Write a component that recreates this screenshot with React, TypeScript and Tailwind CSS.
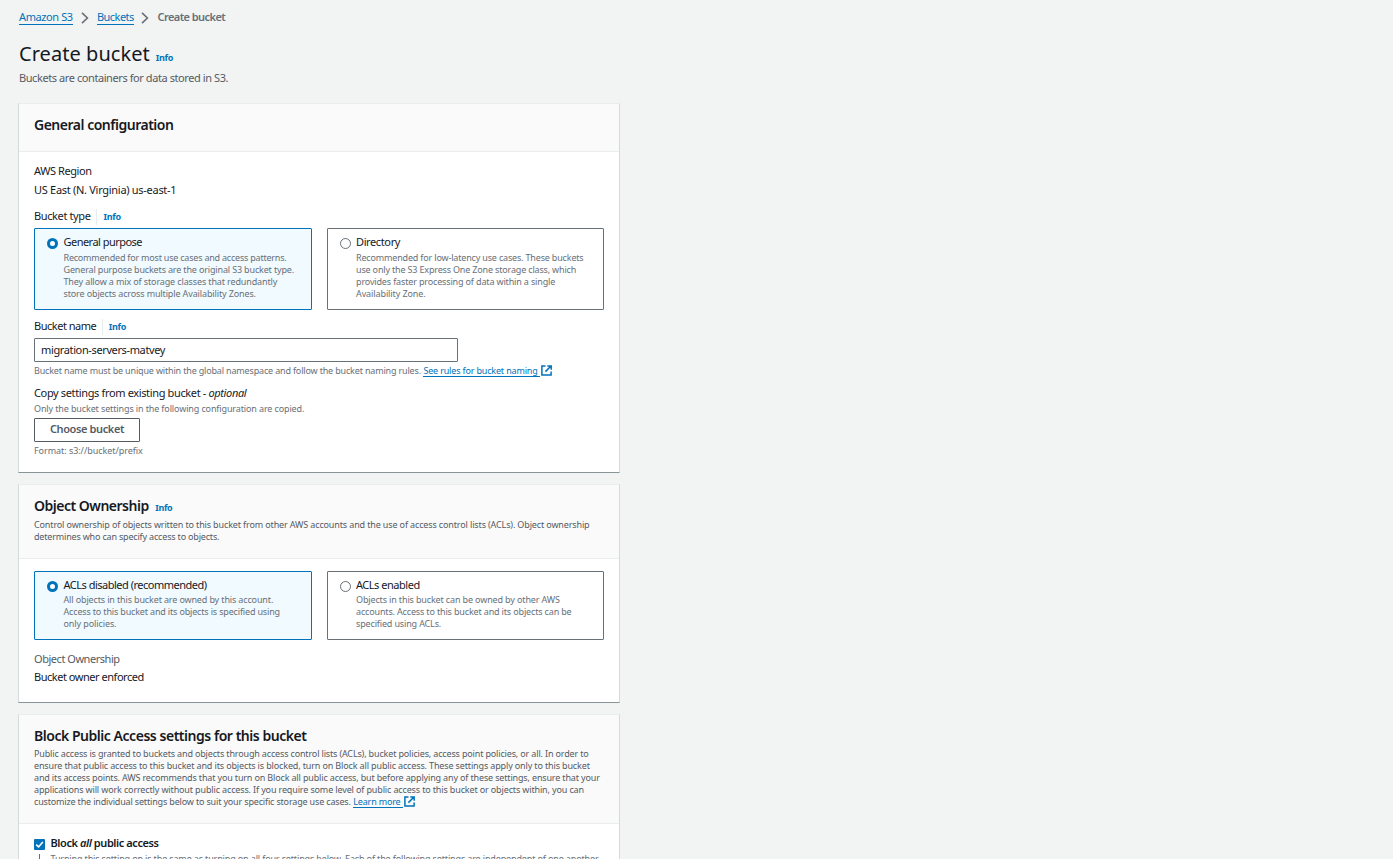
import type { ReactNode } from "react";

const BODY = "block whitespace-nowrap text-[11px] leading-[18px]";
const SMALL = "block whitespace-nowrap text-[9px] leading-[12px]";

function ExternalIcon() {
  return (
    <svg className="h-[11px] w-[11px] shrink-0" viewBox="0 0 11 11" fill="none" stroke="#0073bb" strokeWidth="1.5">
      <path d="M4.5 1H0.9v9.1h9.2V6.5" />
      <path d="M6.3 0.9h3.9v3.9M10 1 4.4 6.6" />
    </svg>
  );
}

function Chevron() {
  return (
    <svg className="h-[12px] w-[8px] shrink-0" viewBox="0 0 8 12" fill="none" stroke="#687078" strokeWidth="1.6">
      <path d="M1 0.8l5.4 5.2L1 11.2" />
    </svg>
  );
}

function Info() {
  return <a className="block whitespace-nowrap text-[9px] font-bold leading-[12px] tracking-[-0.3px] text-[#0073bb]">Info</a>;
}

function SmallLink({ children }: { children: ReactNode }) {
  return (
    <a className="flex h-[12px] gap-[1px] text-[#0073bb]">
      <span className="whitespace-nowrap pr-[2px] shadow-[inset_0_-1px_0_#0073bb]">{children}</span>
      <ExternalIcon />
    </a>
  );
}

function Card({ header, headerClass, className, children }: { header: ReactNode; headerClass: string; className: string; children: ReactNode }) {
  return (
    <section className={"flex w-[602px] shrink-0 flex-col border border-[#d5dbdb] border-t-[#eaeded] border-b-[#879596] bg-white " + className}>
      <header className={"shrink-0 border-b border-[#eaeded] bg-[#fafafa] px-[15px] " + headerClass}>{header}</header>
      <div className="px-[15px]">{children}</div>
    </section>
  );
}

function Option({ selected, title, titleClass, lines, className }: { selected?: boolean; title: string; titleClass: string; lines: [string, string][]; className: string }) {
  return (
    <label className={"flex rounded-[1px] border pl-[12px] pt-[4px] " + (selected ? "border-[#0073bb] bg-[#f1faff] " : "border-[#687078] bg-white ") + className}>
      <span className={"mt-[5px] h-[11px] w-[11px] shrink-0 rounded-full bg-white " + (selected ? "border-[3.5px] border-[#0073bb]" : "border border-[#687078]")} />
      <span className={"flex flex-col " + (selected ? "ml-[5.5px]" : "ml-[5px]")}>
        <span className={BODY + " text-[#16191f] " + titleClass}>{title}</span>
        {lines.map(([text, tracking]) => (
          <span key={text} className={SMALL + " text-[#687078] " + tracking}>
            {text}
          </span>
        ))}
      </span>
    </label>
  );
}

export default function App() {
  return (
    <div className="h-screen overflow-hidden bg-[#f2f3f3] pl-[18px] font-['Noto_Sans','Open_Sans',sans-serif] text-[#16191f]">
      <nav className="ml-[1px] mt-[8px] flex h-[18px] text-[11px] leading-[18px] text-[#0073bb]">
        <a className="h-[17px] w-[54px] whitespace-nowrap border-b border-[#0073bb] tracking-[-0.4px]">Amazon S3</a>
        <span className="ml-[8px] mt-[4px] flex"><Chevron /></span>
        <a className="ml-[8px] h-[17px] w-[37px] whitespace-nowrap border-b border-[#0073bb] tracking-[-0.55px]">Buckets</a>
        <span className="ml-[7px] mt-[4px] flex"><Chevron /></span>
        <span className="ml-[8.5px] whitespace-nowrap font-semibold tracking-[-0.56px] text-[#687078]">Create bucket</span>
      </nav>

      <div className="ml-[1px] mt-[14px] flex h-[28px] items-baseline">
        <h1 className="whitespace-nowrap text-[20px] leading-[28px] tracking-[0.05px]">Create bucket</h1>
        <div className="ml-[6px] flex"><Info /></div>
      </div>
      <p className={BODY + " ml-[1px] mt-[1px] tracking-[-0.42px] text-[#545b64]"}>Buckets are containers for data stored in S3.</p>

      <Card
        className="mt-[16px] h-[370px]"
        headerClass="h-[48px] pt-[11px]"
        header={<h2 className="whitespace-nowrap text-[14px] font-semibold leading-[20px] tracking-[-0.49px]">General configuration</h2>}
      >
        <div className={BODY + " mt-[10px] tracking-[-0.43px]"}>AWS Region</div>
        <div className={BODY + " mt-[1px] tracking-[-0.29px]"}>US East (N. Virginia) us-east-1</div>
        <div className="mt-[8px] flex h-[18px] items-baseline">
          <span className={BODY + " tracking-[-0.38px]"}>Bucket type</span>
          <span className="ml-[5.5px] mr-[6.5px] mt-[2px] w-[1px] self-stretch bg-[#eaeded]" />
          <Info />
        </div>
        <div className="mt-[3px] flex gap-[15px]">
          <Option
            selected
            className="h-[82px] w-[278px]"
            title="General purpose"
            titleClass="tracking-[-0.53px] mb-[1px]"
            lines={[
              ["Recommended for most use cases and access patterns.", "tracking-[-0.212px]"],
              ["General purpose buckets are the original S3 bucket type.", "tracking-[-0.157px]"],
              ["They allow a mix of storage classes that redundantly", "tracking-[-0.13px]"],
              ["store objects across multiple Availability Zones.", "tracking-[-0.13px]"],
            ]}
          />
          <Option
            className="h-[82px] w-[277px]"
            title="Directory"
            titleClass="tracking-[-0.38px] mb-[1px]"
            lines={[
              ["Recommended for low-latency use cases. These buckets", "tracking-[-0.171px]"],
              ["use only the S3 Express One Zone storage class, which", "tracking-[-0.17px]"],
              ["provides faster processing of data within a single", "tracking-[-0.15px]"],
              ["Availability Zone.", "tracking-[-0.1px]"],
            ]}
          />
        </div>
        <div className="mt-[7px] flex h-[18px] items-baseline">
          <span className={BODY + " tracking-[-0.48px]"}>Bucket name</span>
          <span className="ml-[5.5px] mr-[6px] mt-[2px] w-[1px] self-stretch bg-[#eaeded]" />
          <Info />
        </div>
        <div className="mt-[3px] h-[24px] w-[424px] rounded-[1px] border border-[#687078] bg-white pl-[6px] pt-[2px]">
          <span className={BODY + " tracking-[-0.37px]"}>migration-servers-matvey</span>
        </div>
        <div className="mt-[3px] flex h-[12px] gap-[2.5px] text-[9px] leading-[12px] tracking-[-0.168px] text-[#687078]">
          <span className="whitespace-nowrap">Bucket name must be unique within the global namespace and follow the bucket naming rules.</span>
          <SmallLink>See rules for bucket naming</SmallLink>
        </div>
        <div className={BODY + " mt-[7px] tracking-[-0.36px]"}>
          Copy settings from existing bucket - <em>optional</em>
        </div>
        <div className={SMALL + " mt-[0.5px] tracking-[-0.125px] text-[#687078]"}>Only the bucket settings in the following configuration are copied.</div>
        <button className="mt-[3.5px] block h-[24px] w-[106px] rounded-[1px] border border-[#545b64] bg-white pb-[2px] text-[11px] font-semibold leading-[20px] tracking-[-0.38px] text-[#545b64]">
          Choose bucket
        </button>
        <div className={SMALL + " mt-[3px] tracking-[-0.05px] text-[#687078]"}>Format: s3://bucket/prefix</div>
      </Card>

      <Card
        className="mt-[11px] h-[219px]"
        headerClass="h-[74px] pt-[11px]"
        header={
          <>
            <div className="flex h-[20px] items-baseline">
              <h2 className="whitespace-nowrap text-[14px] font-semibold leading-[20px] tracking-[-0.5px]">Object Ownership</h2>
              <div className="ml-[6.5px] flex"><Info /></div>
            </div>
            <div className="mt-[3px] text-[#545b64]">
              <span className={SMALL + " tracking-[-0.136px]"}>Control ownership of objects written to this bucket from other AWS accounts and the use of access control lists (ACLs). Object ownership</span>
              <span className={SMALL + " tracking-[-0.18px]"}>determines who can specify access to objects.</span>
            </div>
          </>
        }
      >
        <div className="mt-[12px] flex gap-[15px]">
          <Option
            selected
            className="h-[69px] w-[278px]"
            title="ACLs disabled (recommended)"
            titleClass="tracking-[-0.5px]"
            lines={[
              ["All objects in this bucket are owned by this account.", "tracking-[-0.14px]"],
              ["Access to this bucket and its objects is specified using", "tracking-[-0.165px]"],
              ["only policies.", "tracking-[-0.1px]"],
            ]}
          />
          <Option
            className="h-[69px] w-[277px]"
            title="ACLs enabled"
            titleClass="tracking-[-0.47px]"
            lines={[
              ["Objects in this bucket can be owned by other AWS", "tracking-[-0.14px]"],
              ["accounts. Access to this bucket and its objects can be", "tracking-[-0.155px]"],
              ["specified using ACLs.", "tracking-[-0.15px]"],
            ]}
          />
        </div>
        <div className={BODY + " mt-[10px] tracking-[-0.46px] text-[#545b64]"}>Object Ownership</div>
        <div className={BODY + " tracking-[-0.47px]"}>Bucket owner enforced</div>
      </Card>

      <Card
        className="mt-[11px] h-[300px]"
        headerClass="h-[109px] pt-[11px]"
        header={
          <>
            <h2 className="whitespace-nowrap text-[14px] font-semibold leading-[20px] tracking-[-0.463px]">Block Public Access settings for this bucket</h2>
            <div className="mt-[2px] text-[#545b64]">
              <span className={SMALL + " tracking-[-0.155px]"}>Public access is granted to buckets and objects through access control lists (ACLs), bucket policies, access point policies, or all. In order to</span>
              <span className={SMALL + " tracking-[-0.14px]"}>ensure that public access to this bucket and its objects is blocked, turn on Block all public access. These settings apply only to this bucket</span>
              <span className={SMALL + " tracking-[-0.155px]"}>and its access points. AWS recommends that you turn on Block all public access, but before applying any of these settings, ensure that your</span>
              <span className={SMALL + " tracking-[-0.14px]"}>applications will work correctly without public access. If you require some level of public access to this bucket or objects within, you can</span>
              <div className="flex h-[12px] gap-[2.5px] text-[9px] leading-[12px] tracking-[-0.165px]">
                <span className="whitespace-nowrap">customize the individual settings below to suit your specific storage use cases.</span>
                <SmallLink>Learn more</SmallLink>
              </div>
            </div>
          </>
        }
      >
        <div className="mt-[10px] flex">
          <div className="flex w-[11px] flex-col items-center">
            <svg className="mt-[5px] h-[11px] w-[11px] shrink-0" viewBox="0 0 11 11" fill="none">
              <rect width="11" height="11" rx="1" fill="#0073bb" />
              <path d="M2.2 5.6l2.4 2.3 4.2-5" stroke="#fff" strokeWidth="1.6" />
            </svg>
            <span className="mt-[4px] h-[60px] w-[1px] bg-[#687078]" />
          </div>
          <div className="ml-[5.5px]">
            <div className={BODY + " font-semibold tracking-[-0.42px]"}>
              Block <em>all</em> public access
            </div>
            <div className={SMALL + " mt-[1px] tracking-[-0.14px] text-[#687078]"}>Turning this setting on is the same as turning on all four settings below. Each of the following settings are independent of one another.</div>
          </div>
        </div>
      </Card>
    </div>
  );
}
